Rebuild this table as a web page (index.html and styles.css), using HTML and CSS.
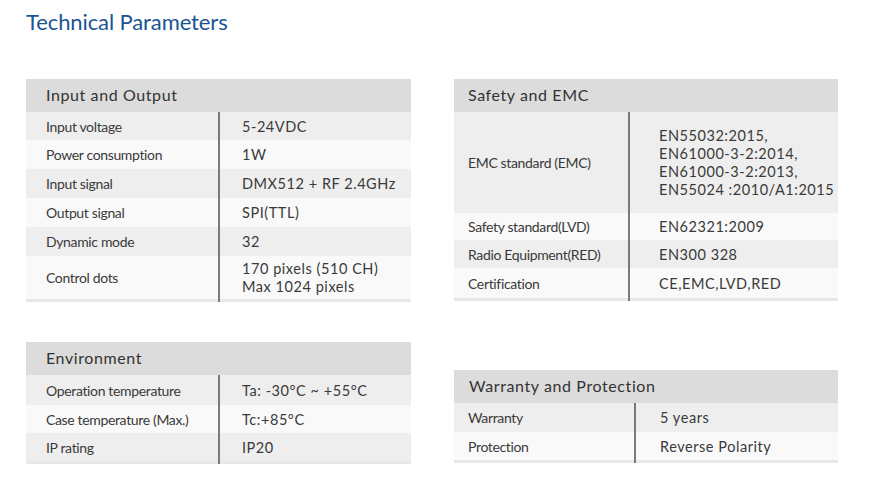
FILE: index.html
```html
<!DOCTYPE html>
<html>
<head>
<meta charset="utf-8">
<link rel="stylesheet" href="styles.css">
</head>
<body>
<h1 class="title">Technical Parameters</h1>
<div class="grid">
  <div class="col">
    <div class="tbl tbl-left">
      <div class="hd">Input and Output</div>
      <div class="row g h28"><div class="k">Input voltage</div><div class="v">5-24VDC</div></div>
      <div class="row w h29"><div class="k">Power consumption</div><div class="v">1W</div></div>
      <div class="row g h29"><div class="k">Input signal</div><div class="v">DMX512 + RF 2.4GHz</div></div>
      <div class="row w h29"><div class="k">Output signal</div><div class="v">SPI(TTL)</div></div>
      <div class="row g h29"><div class="k">Dynamic mode</div><div class="v">32</div></div>
      <div class="row w h43"><div class="k">Control dots</div><div class="v">170 pixels (510 CH)<br>Max 1024 pixels</div></div>
      <div class="row strip"><div class="k"></div><div class="v"></div></div>
    </div>
    <div class="tbl tbl-left env">
      <div class="hd">Environment</div>
      <div class="row g h30"><div class="k">Operation temperature</div><div class="v">Ta: -30°C ~ +55°C</div></div>
      <div class="row w h28"><div class="k">Case temperature (Max.)</div><div class="v">Tc:+85°C</div></div>
      <div class="row g h28"><div class="k">IP rating</div><div class="v">IP20</div></div>
      <div class="row strip"><div class="k"></div><div class="v"></div></div>
    </div>
  </div>
  <div class="col">
    <div class="tbl tbl-right">
      <div class="hd">Safety and EMC</div>
      <div class="row g h101"><div class="k">EMC standard (EMC)</div><div class="v multi">EN55032:2015,<br>EN61000-3-2:2014,<br>EN61000-3-2:2013,<br>EN55024 :2010/A1:2015</div></div>
      <div class="row w h27"><div class="k">Safety standard(LVD)</div><div class="v">EN62321:2009</div></div>
      <div class="row g h28"><div class="k">Radio Equipment(RED)</div><div class="v">EN300 328</div></div>
      <div class="row w h30"><div class="k">Certification</div><div class="v">CE,EMC,LVD,RED</div></div>
      <div class="row strip"><div class="k"></div><div class="v"></div></div>
    </div>
    <div class="tbl tbl-warr">
      <div class="hd">Warranty and Protection</div>
      <div class="row g h29"><div class="k">Warranty</div><div class="v">5 years</div></div>
      <div class="row w h28"><div class="k">Protection</div><div class="v">Reverse Polarity</div></div>
      <div class="row strip"><div class="k"></div><div class="v"></div></div>
    </div>
  </div>
</div>
</body>
</html>
```
FILE: styles.css
```css
html, body {
  margin: 0;
  padding: 0;
  background: #ffffff;
}
body {
  font-family: "Lato", "Liberation Sans", sans-serif;
  color: #333333;
  width: 869px;
  height: 492px;
  overflow: hidden;
}
.title {
  margin: 0;
  padding: 8px 0 0 26px;
  height: 71px;
  box-sizing: border-box;
  font-size: 22px;
  font-weight: 400;
  color: #1a5493;
  line-height: 28px;
  letter-spacing: -0.1px;
}
.grid {
  display: grid;
  grid-template-columns: 385px 384px;
  column-gap: 43px;
  padding-left: 26px;
  margin-top: 8px;
}
.col {
  display: flex;
  flex-direction: column;
}
.tbl .hd {
  height: 33px;
  box-sizing: border-box;
  padding-bottom: 3px;
  background: #dcdcdc;
  display: flex;
  align-items: center;
  font-size: 16px;
  letter-spacing: 0.6px;
  color: #333;
}
.row {
  display: grid;
}
.row .k, .row .v {
  display: flex;
  align-items: center;
  font-size: 14px;
  color: #3a3a3a;
}
.row .k {
  letter-spacing: -0.35px;
}
.row .v {
  border-left: 2px solid #7a7a7a;
  font-size: 14.5px;
  letter-spacing: 0.55px;
}
.row .v.multi {
  line-height: 18px;
}
.g { background: #eeeeee; }
.w { background: #f9f9f9; }
.strip { height: 3px; background: #e8e8e8; }
.h27 { height: 27px; }
.h28 { height: 28px; }
.h29 { height: 29px; }
.h30 { height: 30px; }
.h43 { height: 43px; }
.h43 .v { line-height: 18px; }
.h101 { height: 101px; }

.tbl-left .hd { padding-left: 20px; }
.tbl-left .row { grid-template-columns: 192px 1fr; }
.tbl-left .k { padding-left: 20px; }
.tbl-left .v { padding-left: 22px; }
.env { margin-top: 40px; }

.tbl-right .hd { padding-left: 14px; }
.tbl-right .row { grid-template-columns: 174px 1fr; }
.tbl-right .k { padding-left: 14px; }
.tbl-right .v { padding-left: 29px; }

.tbl-warr { margin-top: 69px; }
.tbl-warr .hd { padding-left: 15px; }
.tbl-warr .row { grid-template-columns: 180px 1fr; }
.tbl-warr .k { padding-left: 14px; }
.tbl-warr .v { padding-left: 24px; }
```
